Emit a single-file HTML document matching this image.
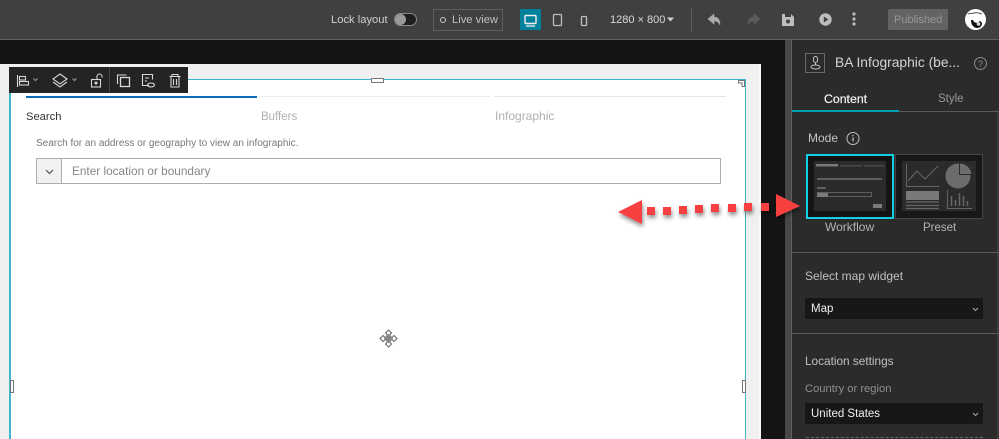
<!DOCTYPE html>
<html>
<head>
<meta charset="utf-8">
<style>
html,body{margin:0;padding:0;background:#141414}
body{width:999px;height:439px;overflow:hidden;position:relative;font-family:"Liberation Sans",sans-serif}
.a{position:absolute}
.t{position:absolute;white-space:nowrap;line-height:14px}
svg{position:absolute;overflow:visible}
</style>
</head>
<body>
<!-- top bar -->
<div class="a" style="left:0;top:0;width:999px;height:39px;background:#404040"></div>
<div class="a" style="left:0;top:39px;width:999px;height:1px;background:#5f5f5f"></div>
<div class="t" style="left:331px;top:13px;font-size:11.2px;color:#cfcfcf">Lock layout</div>
<div class="a" style="left:394px;top:13px;width:21px;height:11px;border:1px solid #8a8a8a;border-radius:7px;background:#1f1f1f"></div>
<div class="a" style="left:395px;top:14px;width:11px;height:11px;border-radius:50%;background:#9a9a9a"></div>
<div class="a" style="left:433px;top:9px;width:68px;height:20px;border:1px solid #5e5e5e"></div>
<div class="a" style="left:440px;top:17px;width:4px;height:4px;border:1px solid #c8c8c8;border-radius:50%"></div>
<div class="t" style="left:452px;top:13px;font-size:11.2px;color:#c0c0c0">Live view</div>
<div class="a" style="left:520px;top:9px;width:21px;height:21px;background:#00819b"></div>
<svg style="left:0;top:0" width="999" height="40" fill="none">
<rect x="525" y="15.5" width="11" height="8" rx="1" stroke="#f0f0f0" stroke-width="1.4"/>
<path d="M526 26h9" stroke="#f0f0f0" stroke-width="1.3"/>
<rect x="553.5" y="14.5" width="8" height="11" rx="1" stroke="#bdbdbd" stroke-width="1.3"/>
<rect x="581.5" y="16.5" width="5" height="9" rx="1" stroke="#bdbdbd" stroke-width="1.3"/>
<path d="M667 17.5h7l-3.500 4z" fill="#d0d0d0"/>
<path d="M691.5 8v24" stroke="#5e5e5e"/>
<path d="M708 19l6-5v3c4 0 6 3 6 8-1.500-3-3-4-6-4v3z" fill="#aaa" stroke="#aaa" stroke-width=".6"/>
<path d="M760 19l-6-5v3c-4 0-6 3-6 8 1.500-3 3-4 6-4v3z" fill="#5c5c5c" stroke="#5c5c5c" stroke-width=".6"/>
<path d="M782 14h9l3 3v9h-12z" fill="#bdbdbd"/>
<rect x="785" y="14" width="6" height="3" fill="#404040"/>
<circle cx="788" cy="21.500" r="2" fill="#404040"/>
<circle cx="825.500" cy="19.500" r="6.200" fill="#bdbdbd"/>
<path d="M823.800 16.500l4.500 3-4.500 3z" fill="#404040"/>
<circle cx="854" cy="14" r="1.600" fill="#bdbdbd"/><circle cx="854" cy="19" r="1.600" fill="#bdbdbd"/><circle cx="854" cy="24" r="1.600" fill="#bdbdbd"/>
<circle cx="975.500" cy="19.500" r="10.500" fill="#fff"/>
<path d="M968 14c2-1 4 0 6-1s5 0 8 1" stroke="#555" stroke-width="1"/>
<path d="M971 20c0 5 3 8 6 8 3 0 5-2 5-5l-2-2-3 2-3-1-1-2z" fill="#111"/>
<circle cx="978.500" cy="24" r="1.800" fill="#ddd"/>
</svg>
<div class="t" style="left:610px;top:13px;font-size:11px;color:#d8d8d8">1280 × 800</div>
<div class="a" style="left:888px;top:9px;width:60px;height:21px;background:#636363;border-radius:1px"></div>
<div class="t" style="left:894px;top:13px;font-size:11px;color:#969696">Published</div>

<!-- page -->
<div class="a" style="left:0;top:64px;width:761px;height:375px;background:#f0f0f0"></div>
<div class="a" style="left:759px;top:64px;width:2px;height:375px;background:#fafafa"></div>
<div class="a" style="left:9px;top:79px;width:737px;height:360px;background:#fff;border-top:1px solid #3fb6cc;border-left:2px solid #3fb6cc;border-right:1px solid #3fb6cc;box-sizing:border-box"></div>

<!-- tabs -->
<div class="a" style="left:26px;top:96px;width:231px;height:2px;background:#0b6cbc"></div>
<div class="a" style="left:260px;top:96px;width:230px;height:1px;background:#eeeeee"></div>
<div class="a" style="left:494px;top:96px;width:232px;height:1px;background:#e6e6e6"></div>
<div class="t" style="left:26px;top:110px;font-size:11.2px;color:#333">Search</div>
<div class="t" style="left:261px;top:110px;font-size:11.500px;color:#b0b0b0">Buffers</div>
<div class="t" style="left:495px;top:109px;font-size:12px;color:#b0b0b0">Infographic</div>
<div class="t" style="left:36px;top:137px;font-size:10px;color:#777">Search for an address or geography to view an infographic.</div>
<div class="a" style="left:36px;top:158px;width:685px;height:26px;border:1px solid #adadad;box-sizing:border-box;background:#fff"></div>
<div class="a" style="left:36px;top:158px;width:26px;height:26px;border:1px solid #adadad;box-sizing:border-box;background:#f1f1f1"></div>
<div class="t" style="left:72px;top:164px;font-size:11.800px;color:#858585">Enter location or boundary</div>

<!-- handles and page svg -->
<svg style="left:0;top:0" width="999" height="439" fill="none">
<path d="M46 170l3.500 3.500 3.500-3.500" stroke="#555" stroke-width="1.200"/>
<rect x="371.500" y="78.500" width="12" height="4" fill="#fff" stroke="#777"/>
<path d="M738.500 80.500h6v6h-2.500v-3.500h-3.500z" fill="#fff" stroke="#777"/>
<rect x="10.500" y="380.500" width="3" height="12" fill="#fff" stroke="#777"/>
<rect x="742.500" y="380.500" width="3" height="12" fill="#fff" stroke="#777"/>
<g stroke="#6a6a6a" stroke-width="1.100" fill="#fff">
<path d="M388.500 330l3 3-1.500 1.500v2.500h-3v-2.500l-1.500-1.500z"/>
<path d="M388.500 347l3-3-1.500-1.500v-2.500h-3v2.500l-1.500 1.500z"/>
<path d="M380 338.500l3-3 1.500 1.500h2.500v3h-2.500l-1.500 1.500z"/>
<path d="M397 338.500l-3-3-1.500 1.500h-2.500v3h2.500l1.500 1.500z"/>
</g>
<path d="M388.500 334v9M384 338.500h9" stroke="#888" stroke-width="1.500"/>
</svg>

<!-- floating toolbar -->
<div class="a" style="left:9px;top:67px;width:179px;height:26px;background:#242424"></div>
<div class="a" style="left:109px;top:67px;width:1px;height:26px;background:#444"></div>
<svg style="left:0;top:0" width="999" height="439" fill="none" stroke="#d8d8d8" stroke-width="1.100">
<path d="M17.500 75v12"/><rect x="19.500" y="76.500" width="6" height="3.500"/><rect x="19.500" y="81.500" width="9" height="3.500"/>
<path d="M33.500 78.500l2 2 2-2M72.500 78.500l2 2 2-2" stroke="#999"/>
<path d="M60 74l7 5-7 5-7-5z"/><path d="M53 82l7 5 7-5"/>
<rect x="91.500" y="79.500" width="9" height="7.500"/><circle cx="96" cy="83" r="1" fill="#d8d8d8"/>
<path d="M97 79.500v-3a2.500 2.500 0 0 1 5 0v1"/>
<rect x="120.500" y="77.500" width="9" height="9" stroke-width="1.300"/><path d="M117.500 84v-9h9"/>
<path d="M149 85.500h-6.500v-11h10v5"/><path d="M145 78h4M145 81h2"/><ellipse cx="151" cy="85" rx="3.500" ry="2"/>
<path d="M169.500 76.500h11M172 76v-1.500h6V76M171 77v10h8V77M173.500 79v6M176.500 79v6"/>
</svg>

<!-- right panel -->
<div class="a" style="left:785px;top:40px;width:6px;height:399px;background:#484848"></div>
<div class="a" style="left:791px;top:40px;width:1px;height:399px;background:#606060"></div>
<div class="a" style="left:792px;top:40px;width:207px;height:399px;background:#2b2b2b"></div>
<div class="a" style="left:997px;top:112px;width:2px;height:327px;background:#3d3d3d"></div>

<div class="a" style="left:805px;top:53px;width:20px;height:20px;border:1px solid #6a6a6a;box-sizing:border-box"></div>
<svg style="left:0;top:0" width="999" height="439" fill="none" stroke="#c0c0c0" stroke-width="1">
<rect x="813.500" y="56.500" width="4" height="6" rx="2"/><path d="M815.500 62.500v3"/><ellipse cx="815.500" cy="67" rx="4.500" ry="2"/>
<circle cx="980.500" cy="63.500" r="6" stroke="#8c8c8c"/>
<circle cx="853" cy="138.500" r="6" stroke="#c0c0c0"/><path d="M853 137.500v4M853 135v1.300" stroke-width="1.300"/>
</svg>
<div class="t" style="left:835px;top:56px;font-size:13.800px;color:#d4d4d4">BA Infographic (be...</div>
<div class="t" style="left:978px;top:57px;font-size:9px;color:#8c8c8c">?</div>
<div class="t" style="left:824px;top:92px;font-size:12.300px;color:#f4f4f4;-webkit-text-stroke:.2px #f4f4f4">Content</div>
<div class="t" style="left:938px;top:92px;font-size:11.500px;color:#9a9a9a">Style</div>
<div class="a" style="left:792px;top:111px;width:207px;height:1px;background:#5a5a5a"></div>
<div class="a" style="left:792px;top:110px;width:107px;height:2px;background:#00a0b4"></div>
<div class="t" style="left:808px;top:131px;font-size:12px;color:#c4c4c4">Mode</div>

<!-- mode cards -->
<div class="a" style="left:806px;top:154px;width:88px;height:65px;border:2px solid #12cfe6;box-sizing:border-box;background:#141414"></div>
<div class="a" style="left:895px;top:154px;width:88px;height:65px;border:1px solid #454545;box-sizing:border-box;background:#181818"></div>
<div class="a" style="left:814px;top:161px;width:72px;height:50px;background:#2b2b2b"></div>
<div class="a" style="left:902px;top:161px;width:74px;height:50px;background:#2b2b2b"></div>
<svg style="left:0;top:0" width="999" height="439" fill="none">
<rect x="816" y="164" width="22" height="2.500" fill="#7a7a7a"/>
<rect x="840" y="165" width="22" height="1.500" fill="#4a4a4a"/><rect x="864" y="165" width="20" height="1.500" fill="#4a4a4a"/>
<rect x="817" y="178" width="65" height="2" fill="#5f5f5f"/>
<rect x="817" y="187" width="9" height="2" fill="#5f5f5f"/>
<rect x="817.500" y="192.500" width="54" height="4" stroke="#5f5f5f"/><rect x="817" y="193" width="11" height="4" fill="#7a7a7a"/>
<rect x="873" y="205" width="9" height="4" fill="#7a7a7a" transform="translate(0 -1)"/>
<path d="M906.500 164v22.500H939" stroke="#666" stroke-width="1"/>
<path d="M908 181l9-10 8 8 13-13" stroke="#666" stroke-width="1"/>
<rect x="906" y="191" width="33" height="9" fill="#797979"/>
<path d="M906 202h33M906 205.500h33M906 208.500h33" stroke="#666" stroke-width="1.200"/>
<circle cx="958" cy="176" r="12.500" fill="#6c6c6c"/>
<path d="M959.500 163v11.500H972a12.500 12.500 0 0 0-12.500-11.500z" fill="#6c6c6c" stroke="#2b2b2b"/>
<path d="M947.500 190v18.500H972" stroke="#666"/>
<path d="M951.500 206v-10M955.500 206v-6M959.500 206v-13M963.500 206v-10M967.500 206v-5" stroke="#666" stroke-width="1.500"/>
</svg>
<div class="t" style="left:825px;top:220px;font-size:12px;color:#b4b4b4">Workflow</div>
<div class="t" style="left:923px;top:221px;font-size:11.500px;color:#b4b4b4">Preset</div>

<div class="a" style="left:792px;top:252px;width:207px;height:1px;background:#5a5a5a"></div>
<div class="t" style="left:805px;top:269px;font-size:12px;color:#c0c0c0">Select map widget</div>
<div class="a" style="left:805px;top:298px;width:178px;height:21px;background:#171717;border-radius:1px"></div>
<div class="t" style="left:811px;top:302px;font-size:11.500px;color:#f0f0f0">Map</div>
<div class="a" style="left:792px;top:333px;width:207px;height:1px;background:#5a5a5a"></div>
<div class="t" style="left:805px;top:354px;font-size:11.800px;color:#c0c0c0">Location settings</div>
<div class="t" style="left:805px;top:382px;font-size:11.200px;color:#8f8f8f">Country or region</div>
<div class="a" style="left:805px;top:403px;width:178px;height:21px;background:#171717;border-radius:1px"></div>
<div class="t" style="left:811px;top:407px;font-size:11.500px;color:#f0f0f0">United States</div>
<div class="a" style="left:806px;top:437px;width:177px;height:0;border-top:1px dashed #6a6a6a"></div>
<svg style="left:0;top:0" width="999" height="439" fill="none" stroke="#aaa" stroke-width="1">
<path d="M973 308l2.500 2.500 2.500-2.500M973 413l2.500 2.500 2.500-2.500"/>
</svg>

<!-- arrow (on top of panel) -->
<svg style="left:0;top:0" width="999" height="439">
<defs><filter id="s" x="-10%" y="-40%" width="120%" height="200%"><feDropShadow dx="1" dy="3" stdDeviation="2" flood-color="#000" flood-opacity=".45"/></filter></defs>
<g fill="#f9403f" filter="url(#s)">
<path d="M618 212l24-12v24z"/>
<rect x="647" y="207" width="8" height="8"/><rect x="663" y="207" width="8" height="8"/><rect x="679" y="206" width="8" height="8"/><rect x="695" y="205" width="8" height="8"/><rect x="711" y="204" width="8" height="8"/><rect x="728" y="204" width="8" height="8"/><rect x="744" y="203" width="8" height="8"/><rect x="761" y="203" width="8" height="8"/>
<path d="M776 194l24 12-24 11z"/>
</g>
</svg>
</body>
</html>
